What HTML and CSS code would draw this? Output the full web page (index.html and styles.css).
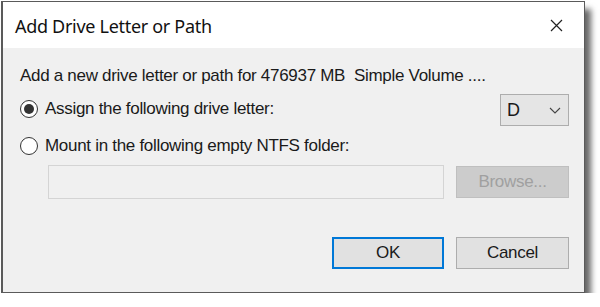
FILE: index.html
```html
<!DOCTYPE html>
<html>
<head>
<meta charset="utf-8">
<link rel="stylesheet" href="styles.css">
</head>
<body>
<div class="dialog">
  <div class="titlebar">
    <span class="title">Add Drive Letter or Path</span>
    <svg class="close" width="13" height="13" viewBox="0 0 13 13"><path d="M1 1 L12 12 M12 1 L1 12" stroke="#222" stroke-width="1.2" fill="none"/></svg>
  </div>
  <div class="body">
    <div class="desc">Add a new drive letter or path for 476937 MB&nbsp; Simple Volume ....</div>
    <div class="row row1">
      <label class="opt"><span class="radio checked"></span><span>Assign the following drive letter:</span></label>
      <div class="select"><span>D</span><svg width="12" height="7" viewBox="0 0 12 7"><path d="M1 1 L6 6 L11 1" stroke="#444" stroke-width="1.1" fill="none"/></svg></div>
    </div>
    <div class="row row2">
      <label class="opt"><span class="radio"></span><span>Mount in the following empty NTFS folder:</span></label>
    </div>
    <div class="folder">
      <div class="field"></div>
      <div class="btn disabled">Browse...</div>
    </div>
    <div class="buttons">
      <div class="btn primary">OK</div>
      <div class="btn">Cancel</div>
    </div>
  </div>
</div>
</body>
</html>
```
FILE: styles.css
```css
html, body { margin: 0; padding: 0; background: #fff; }
body { font-family: "Liberation Sans", Arial, sans-serif; color: #000; }
.dialog {
  margin: 1px 0 0 1px;
  width: 581px;
  height: 290px;
  border: 1px solid #5a5a5a;
  border-left-width: 2px;
  background: #f0f0f0;
  box-shadow: 6px 8px 6px rgba(0,0,0,0.6);
  display: flex;
  flex-direction: column;
}
.titlebar {
  height: 46px;
  background: #fff;
  display: flex;
  align-items: center;
  justify-content: space-between;
  padding: 0 21px 0 12px;
  flex: none;
}
.title { font-family: "Noto Sans", sans-serif; font-size: 18px; letter-spacing: -0.3px; color: #111; margin-top: 2px; }
.close { display: block; margin-top: 1px; }
.body {
  padding: 0 15px 0 17px;
  display: flex;
  flex-direction: column;
  font-size: 17px;
  letter-spacing: -0.3px;
  color: #1a1a1a;
}
.desc { margin-top: 18px; line-height: 20px; }
.row { display: flex; align-items: center; justify-content: space-between; }
.row1 { margin-top: 8px; height: 32px; }
.row2 { margin-top: 10px; height: 20px; }
.opt { display: flex; align-items: center; gap: 7px; line-height: 20px; }
.row1 .opt { margin-top: -3px; }
.radio {
  width: 16px; height: 16px;
  border: 1px solid #333;
  border-radius: 50%;
  background: #fff;
  display: flex; align-items: center; justify-content: center;
  flex: none;
}
.radio.checked::after {
  content: "";
  width: 10px; height: 10px;
  border-radius: 50%;
  background: #333;
}
.select {
  height: 30px;
  border: 1px solid #adadad;
  background: #e5e5e5;
  display: flex; align-items: center; justify-content: space-between;
  padding: 0 7px 0 6px;
  box-sizing: content-box;
  width: 54px;
}
.select span { font-size: 18px; }
.folder { margin-top: 9px; margin-left: 28px; display: flex; align-items: center; gap: 12px; }
.field { width: 394px; height: 32px; border: 1px solid #d4d4d4; background: #f0f0f0; }
.btn {
  width: 111px; height: 30px;
  border: 1px solid #adadad;
  background: #e1e1e1;
  display: flex; align-items: center; justify-content: center;
  font-size: 17px;
}
.btn.disabled { background: #cccccc; border-color: #bfbfbf; color: #a0a0a0; }
.buttons { margin-top: 38px; display: flex; justify-content: flex-end; gap: 12px; }
.btn.primary { border: 2px solid #0078d7; width: 108px; height: 28px; }
```
